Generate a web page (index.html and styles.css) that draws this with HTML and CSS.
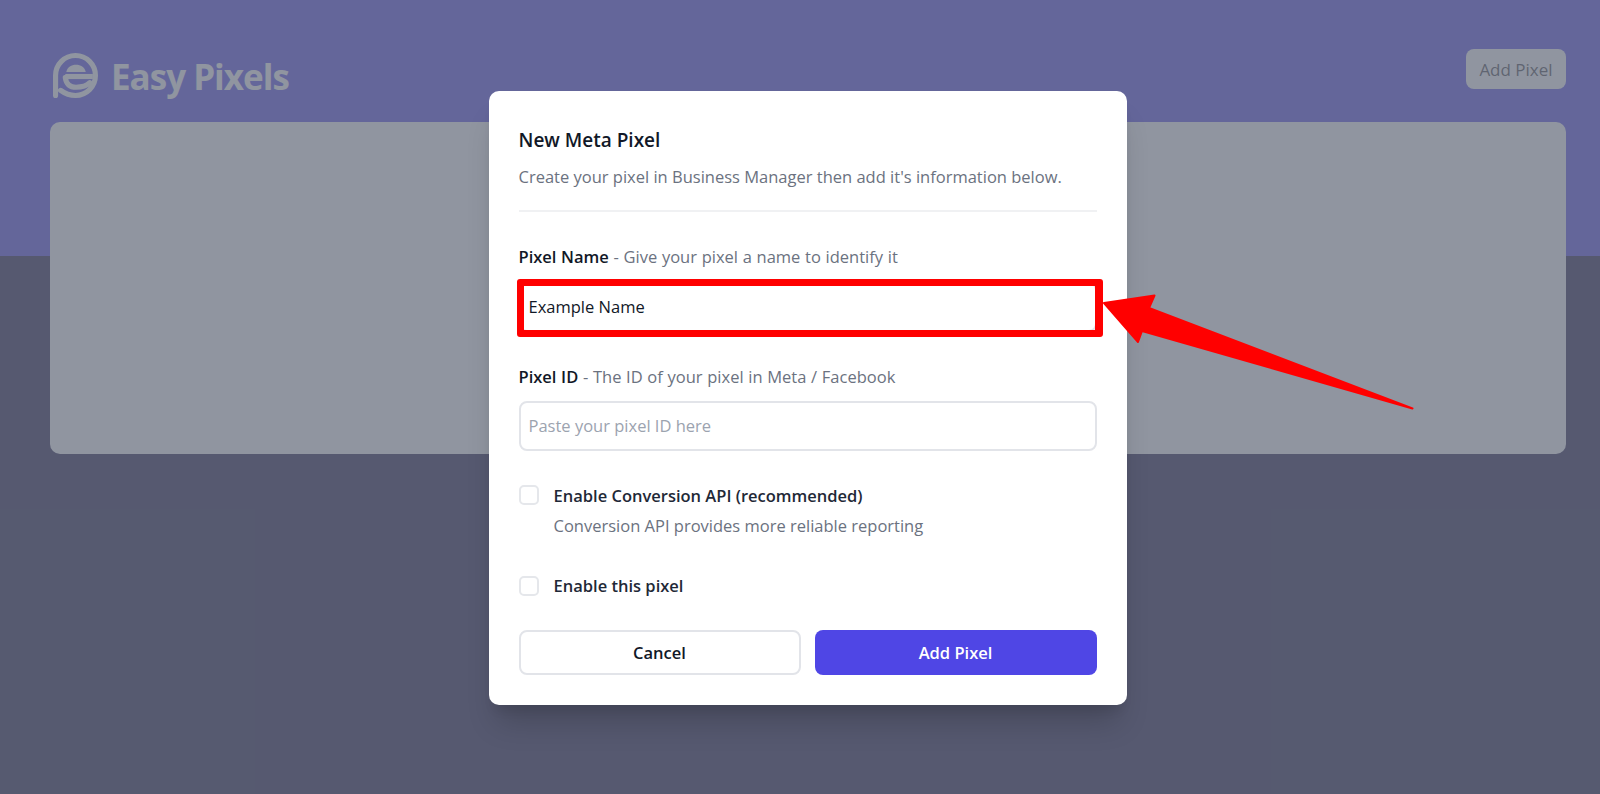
FILE: index.html
```html
<!DOCTYPE html>
<html lang="en">
<head>
  <meta charset="UTF-8">
  <meta name="viewport" content="width=device-width, initial-scale=1.0">
  <title>Easy Pixels</title>
  <link rel="stylesheet" href="styles.css">
</head>
<body>
  <div class="hero">
    <header class="topbar">
      <div class="brand">
        <svg class="brand-logo" viewBox="0 0 44 44" fill="none">
          <path d="M2.5 41.5V22A19.5 19.5 0 1 1 22 41.5C16.5 41.5 11.5 39.5 7.5 36.5" stroke="#fff" stroke-width="5" stroke-linecap="round"/>
          <path d="M13 18.500C14 14 18 11.500 22.500 11.500C27 11.500 31 14 32 18.500Z" fill="#fff"/>
          <path d="M12 23H39" stroke="#fff" stroke-width="5"/>
          <path d="M12 24C13 30.500 17 33.500 22.500 33.500C28 33.500 32.500 32.500 36 29" stroke="#fff" stroke-width="5" stroke-linecap="round"/>
        </svg>
        <span class="brand-name">Easy Pixels</span>
      </div>
      <button class="top-btn">Add Pixel</button>
    </header>
    <div class="panel"></div>
  </div>

  <div class="overlay">
    <div class="modal">
      <h3 class="modal-title">New Meta Pixel</h3>
      <p class="modal-desc">Create your pixel in Business Manager then add it's information below.</p>
      <hr class="divider">

      <div class="field">
        <label class="field-label"><b>Pixel Name</b> - Give your pixel a name to identify it</label>
        <div class="input-wrap">
          <input class="text-input" type="text" value="Example Name">
          <div class="highlight"></div>
        </div>
      </div>

      <div class="field">
        <label class="field-label"><b>Pixel ID</b> - The ID of your pixel in Meta / Facebook</label>
        <div class="input-wrap">
          <input class="text-input" type="text" placeholder="Paste your pixel ID here">
        </div>
      </div>

      <div class="check-row check-first">
        <span class="check-box"></span>
        <div>
          <div class="check-label">Enable Conversion API (recommended)</div>
          <div class="check-help">Conversion API provides more reliable reporting</div>
        </div>
      </div>

      <div class="check-row check-second">
        <span class="check-box"></span>
        <div class="check-label">Enable this pixel</div>
      </div>

      <div class="actions">
        <button class="btn btn-cancel">Cancel</button>
        <button class="btn btn-primary">Add Pixel</button>
      </div>
    </div>
  </div>

  <!-- annotation arrow drawn over the screenshot -->
  <svg class="arrow" viewBox="0 0 1600 794">
    <path d="M1104 303L1154.5 295.5L1149 308L1412.5 408.5L1142 331L1138 342Z" fill="#f00" stroke="#f00" stroke-width="2" stroke-linejoin="round"/>
  </svg>
</body>
</html>
```

FILE: styles.css
```css
* {
  box-sizing: border-box;
}
html, body {
  margin: 0;
  height: 794px;
  overflow: hidden;
}
body {
  font-family: "Open Sans", "Noto Sans", sans-serif;
  background-color: #181240;
  position: relative;
}
.hero {
  height: 256px;
  background-color: #4f46e5;
  padding: 49px 34px 0 50px;
}
.topbar {
  display: flex;
  justify-content: space-between;
  align-items: flex-start;
  height: 73px;
}
.brand {
  display: flex;
  align-items: center;
  gap: 13px;
  padding: 3px 0 0 3px;
}
.brand-logo {
  width: 45px;
  height: 45px;
}
.brand-name {
  color: #fff;
  font-size: 35px;
  font-weight: 700;
  letter-spacing: -1px;
  position: relative;
  top: 1px;
}
.top-btn {
  width: 100px;
  height: 40px;
  border: none;
  border-radius: 8px;
  background-color: #fff;
  color: #3f3f46;
  font-family: inherit;
  font-size: 17px;
  font-weight: 500;
}
.panel {
  height: 332px;
  background-color: #fff;
  border-radius: 10px;
}

.overlay {
  position: absolute;
  inset: 0;
  background-color: rgba(107, 114, 128, 0.75);
  padding: 91px 0 0 488.5px;
}
.modal {
  width: 638px;
  height: 614px;
  background-color: #fff;
  border-radius: 10px;
  padding: 30px;
  box-shadow: 0 25px 30px -8px rgba(0, 0, 0, 0.18), 0 10px 12px -6px rgba(0, 0, 0, 0.1);
}
.modal-title {
  margin: 0;
  font-size: 19px;
  line-height: 38px;
  font-weight: 600;
  color: #111827;
}
.modal-desc {
  margin: 0;
  font-size: 16.5px;
  line-height: 36px;
  color: #6b7280;
}
.divider {
  border: none;
  border-top: 2px solid #f0f1f3;
  margin: 15px 0 0;
}
.field {
  margin-top: 32px;
}
.field-label {
  display: block;
  font-size: 16.5px;
  line-height: 25px;
  word-spacing: 0.4px;
  color: #6b7280;
}
.field-label b {
  font-weight: 600;
  color: #111827;
}
.input-wrap {
  position: relative;
  margin-top: 13px;
}
.field + .field .input-wrap {
  margin-top: 12px;
}
.text-input {
  display: block;
  width: 100%;
  height: 50px;
  padding: 0 8px 2px;
  border: 2px solid #e2e4e9;
  border-radius: 8px;
  font-family: inherit;
  font-size: 16.5px;
  color: #111827;
  outline: none;
}
.text-input::placeholder {
  color: #9ca3af;
}
.highlight {
  position: absolute;
  top: -3px;
  bottom: -5px;
  left: -2px;
  right: -6px;
  border: 7px solid #f00;
  border-right-width: 8px;
  border-radius: 3px;
}
.check-row {
  display: flex;
  gap: 15px;
}
.check-first {
  margin-top: 34px;
}
.check-second {
  margin-top: 38px;
  align-items: center;
}
.check-box {
  flex: none;
  width: 20px;
  height: 20px;
  border: 2px solid #e5e7eb;
  border-radius: 5px;
  background-color: #fff;
}
.check-label {
  font-size: 16.5px;
  line-height: 22px;
  font-weight: 600;
  color: #1f2937;
}
.check-help {
  margin-top: 8px;
  font-size: 16.5px;
  line-height: 22px;
  color: #6b7280;
}
.actions {
  display: grid;
  grid-template-columns: 1fr 1fr;
  gap: 14px;
  margin-top: 33px;
}
.btn {
  height: 45px;
  border-radius: 8px;
  font-family: inherit;
  font-size: 16.5px;
  font-weight: 600;
}
.btn-cancel {
  background-color: #fff;
  border: 2px solid #e2e4e9;
  color: #111827;
}
.btn-primary {
  background-color: #4f46e5;
  border: none;
  color: #fff;
}
.arrow {
  position: absolute;
  top: 0;
  left: 0;
  width: 1600px;
  height: 794px;
  pointer-events: none;
}
```
